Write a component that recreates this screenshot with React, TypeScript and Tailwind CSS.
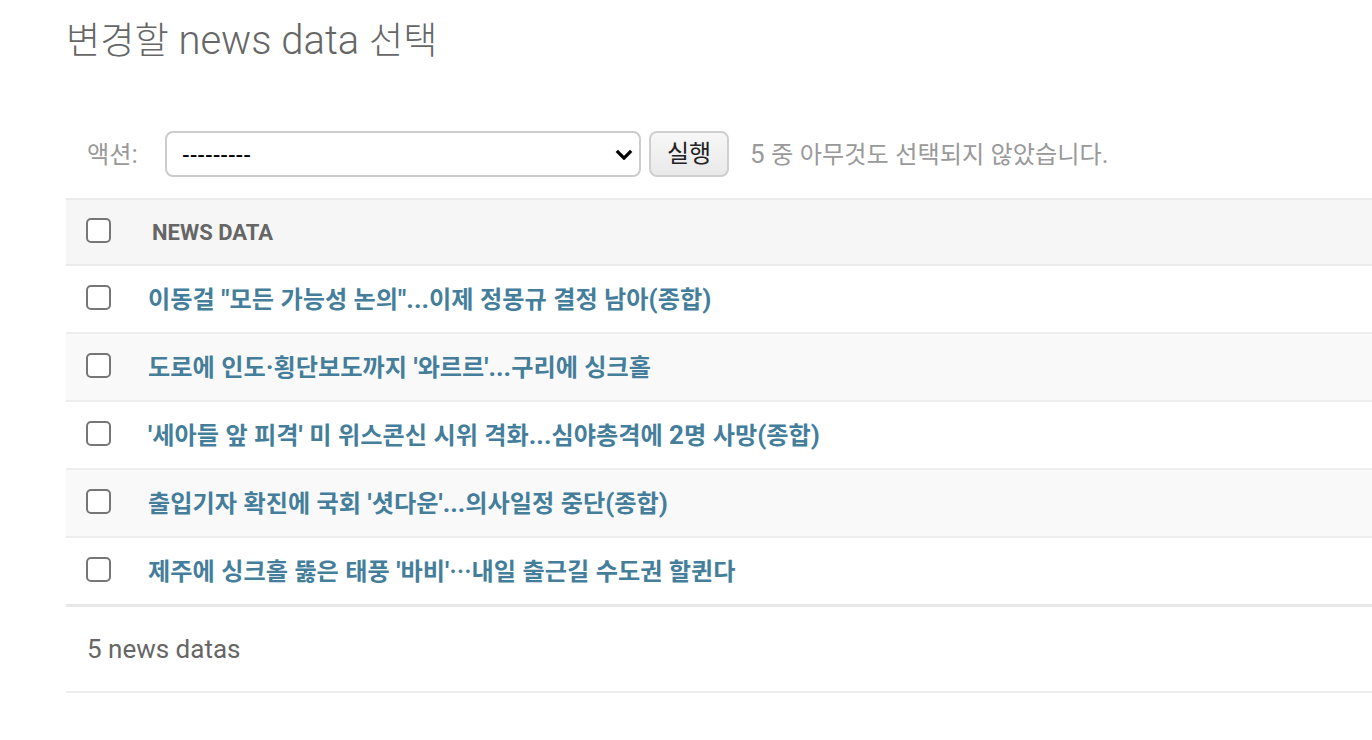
import type { ReactNode } from 'react';

const FONT = 'font-[Roboto,"Noto_Sans_CJK_KR",sans-serif]';

// Hangul falls back to Noto CJK, whose glyphs are wider than the original's;
// shrink Hangul runs a little so line widths stay close.
function Ko({ text }: { text: string }) {
  const parts = text.split(/([\uAC00-\uD7A3\u3131-\u318E]+|…)/);
  return (
    <>
      {parts.map((p, i) => {
        if (p === '…')
          return (
            <span key={i} className='font-["Noto_Sans_CJK_JP",sans-serif] text-[0.86em]'>
              {p}
            </span>
          );
        if (/[\uAC00-\uD7A3]/.test(p))
          return (
            <span key={i} className="text-[0.93em]">
              {p}
            </span>
          );
        return p;
      })}
    </>
  );
}

const ROWS = [
  '이동걸 "모든 가능성 논의"...이제 정몽규 결정 남아(종합)',
  "도로에 인도·횡단보도까지 '와르르'...구리에 싱크홀",
  "'세아들 앞 피격' 미 위스콘신 시위 격화...심야총격에 2명 사망(종합)",
  "출입기자 확진에 국회 '셧다운'...의사일정 중단(종합)",
  "제주에 싱크홀 뚫은 태풍 '바비'…내일 출근길 수도권 할퀸다",
];

function Check() {
  return (
    <input
      type="checkbox"
      className="mb-[4px] h-[25px] w-[25px] appearance-none rounded-[5px] border-2 border-[#767676] bg-white"
    />
  );
}

function Row({ children, shaded, last }: { children: ReactNode; shaded?: boolean; last?: boolean }) {
  return (
    <div
      className={`flex items-center ${
        last ? 'h-[69px] border-b-[3px] border-[#e8e8e8]' : 'h-[68px] border-b-2 border-[#eeeeee]'
      } ${shaded ? 'bg-[#f9f9f9]' : 'bg-white'}`}
    >
      <div className="flex w-[82px] shrink-0 items-center pl-[20px]">
        <Check />
      </div>
      {children}
    </div>
  );
}

export default function App() {
  return (
    <div className={`min-h-screen bg-white ${FONT}`}>
      <div className="pl-[66px]">
        <h1 className="pt-[17px] text-[40px] leading-[48px] font-light text-[#666]">
          <Ko text="변경할 news data 선택" />
        </h1>

        {/* ── Actions ── */}
        <div className="mt-[66px] flex h-[46px] items-center">
          <label className="w-[99px] shrink-0 pl-[21px] text-[26px] text-[#999]">
            <Ko text="액션:" />
          </label>
          <div className="relative w-[476px] shrink-0">
            <select className="h-[46px] w-full appearance-none rounded-[8px] border-2 border-[#cccccc] bg-white pl-[15px] font-['Liberation_Sans',sans-serif] text-[23px] text-black">
              <option>---------</option>
            </select>
            <svg
              viewBox="0 0 20 12"
              className="pointer-events-none absolute top-[18px] right-[8px] h-[11px] w-[18px]"
            >
              <path d="M2 2 L10 10 L18 2" fill="none" stroke="#000" strokeWidth="3.6" />
            </svg>
          </div>
          <button className="ml-[8px] h-[46px] w-[80px] shrink-0 rounded-[8px] border-2 border-[#cfcfcf] bg-gradient-to-b from-[#f7f7f7] to-[#e9e9e9] text-[24px] text-[#222]">
            실행
          </button>
          <span className="ml-[21px] text-[26px] text-[#999]">
            <Ko text="5 중 아무것도 선택되지 않았습니다." />
          </span>
        </div>

        {/* ── Results ── */}
        <div className="mt-[21px]">
          <div className="flex h-[68px] items-center border-y-2 border-[#eaeaea] bg-[#f6f6f6]">
            <div className="flex w-[86px] shrink-0 items-center pl-[20px]">
              <Check />
            </div>
            <span className="text-[22px] font-bold text-[#666]">NEWS DATA</span>
          </div>
          {ROWS.map((r, i) => (
            <Row key={i} shaded={i % 2 === 1} last={i === ROWS.length - 1}>
              <a className="text-[26px] font-bold text-[#447e9b]">
                <Ko text={r} />
              </a>
            </Row>
          ))}
          <div className="flex h-[86px] items-center border-b-2 border-[#eeeeee] pl-[21px] text-[26px] text-[#666]">
            5 news datas
          </div>
        </div>
      </div>
    </div>
  );
}
